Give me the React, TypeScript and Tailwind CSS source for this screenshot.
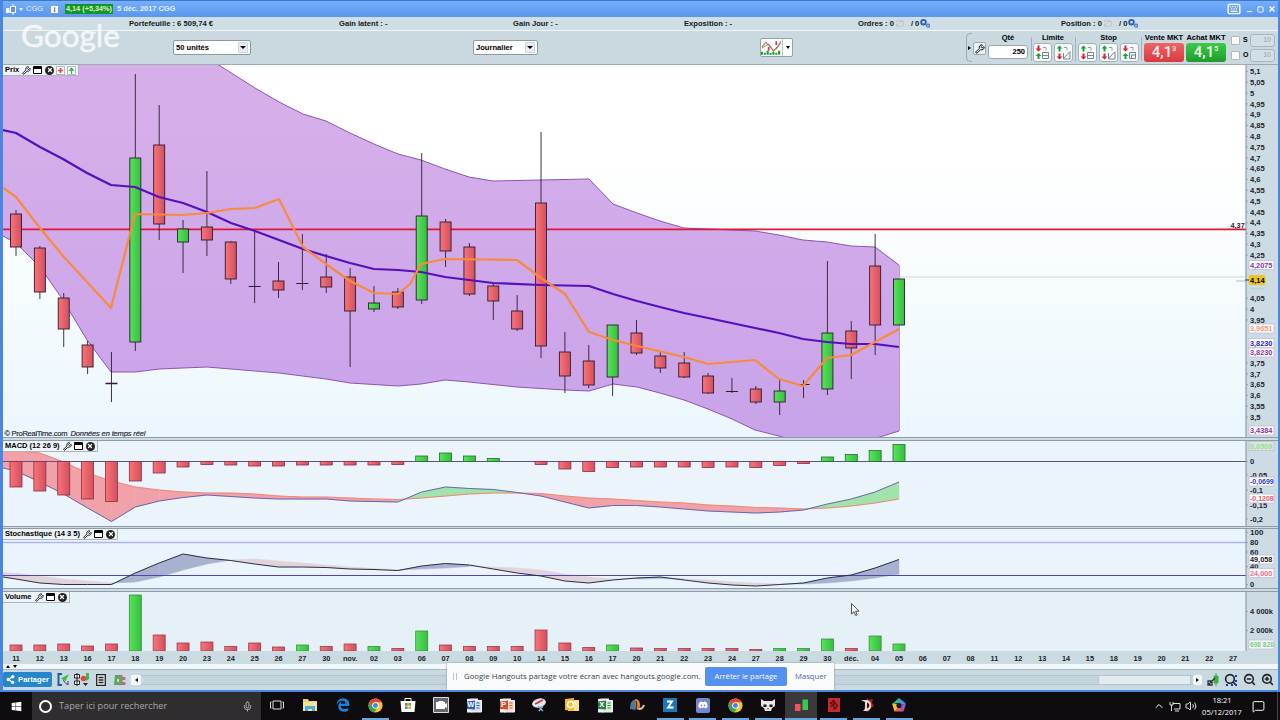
import type { ReactNode } from "react";
import {
  Wrench,
  Keyboard,
  Minus,
  Square,
  X,
  Mic,
  ChevronUp,
  Volume2,
  MessageSquare,
  ZoomIn,
  ZoomOut,
  Search,
} from "lucide-react";
import { FaWindows, FaShareAlt, FaDiscord } from "react-icons/fa";
import { FaEdgeLegacy } from "react-icons/fa6";

const STEP = 23.865;
const xAt = (i: number) => 16 + i * STEP;

// [high, top, bottom, low, up]
const candles: [number, number, number, number, number][] = [
  [210, 214, 247, 256, 0],
  [246, 248, 292, 299, 0],
  [293, 298, 329, 347, 0],
  [341, 345, 367, 374, 0],
  [352, 383, 384.5, 402, 1],
  [74, 158, 342, 351, 1],
  [105, 145, 224, 240, 0],
  [220, 229, 242, 273, 1],
  [171, 227, 240, 256, 0],
  [241, 242, 279, 284, 0],
  [231, 286, 287, 303, 1],
  [262, 281, 290, 298, 0],
  [234, 283, 284, 290, 1],
  [254, 277, 287, 293, 0],
  [268, 277, 311, 367, 0],
  [286, 303, 309, 312, 1],
  [288, 292, 307, 309, 0],
  [153, 216, 300, 304, 1],
  [219, 222, 251, 267, 0],
  [243, 247, 294, 296, 0],
  [284, 286, 301, 320, 0],
  [295, 311, 329, 331, 0],
  [132, 203, 346, 358, 0],
  [332, 352, 376, 393, 0],
  [345, 361, 385, 388, 0],
  [325, 325, 377, 396, 1],
  [320, 333, 353, 355, 0],
  [352, 356, 368, 373, 0],
  [352, 363, 377, 378, 0],
  [373, 376, 393, 394, 0],
  [378, 391, 392, 393, 1],
  [386, 389, 402, 404, 0],
  [380, 391, 402, 415, 1],
  [380, 384, 385, 398, 1],
  [261, 333, 389, 395, 1],
  [321, 331, 348, 379, 0],
  [234, 266, 325, 355, 0],
  [279, 279, 325, 325, 1],
];

const bandTop =
  "214,62 255,88 279,102 303,114 326,121 350,133 374,144 398,154 421,160 445,169 469,177 493,181 541,180 589,179 613,204 637,213 660,221 684,228 708,229 755,231 779,235 803,240 827,242 851,246 875,247 899,265";
const bandLow =
  "3,236 16,243 40,267 63,300 87,340 111,372 135,372 159,369 207,367 231,369 279,373 326,379 350,383 398,386 421,384 445,380 469,382 517,387 565,390 589,391 613,384 637,387 660,393 684,400 708,409 732,419 755,430 779,436 793,440 870,440 899,431";
const slowMa =
  "3,130 16,133 40,147 63,159 87,173 111,185 135,187 159,197 183,203 207,212 231,223 255,231 279,240 303,249 326,256 350,263 374,269 398,270 421,272 445,277 469,280 493,283 541,285 589,286 613,294 637,301 660,307 684,313 708,318 755,328 779,333 803,339 827,342 851,344 875,344 899,347";
const fastMa =
  "3,188 16,197 40,228 63,256 87,282 111,308 135,214 183,215 207,213 231,209 255,208 279,199 303,247 326,264 350,281 374,293 398,294 410,284 421,264 445,259 517,260 541,278 565,294 589,332 613,340 637,346 684,357 708,364 755,360 779,379 803,386 827,358 851,355 875,342 899,329";

const histogram = [
  487, 491, 495, 499, 501.5, 481, 473, 467, 464.5, 465, 466, 466, 465, 465, 465,
  465, 464.5, 456, 453, 456, 458.5, 461, 464.5, 469, 471.5, 467.5, 467, 467, 467,
  467.5, 467, 467.5, 465.5, 463.5, 457, 454.5, 450.5, 444.5,
];
const macd = [
  471, 482, 494, 508, 521.5, 507, 501, 497.5, 495, 496.5, 498, 499, 499, 499, 501,
  501.5, 502, 492, 487, 488.5, 489.5, 492.5, 496, 502, 508, 505.5, 505.5, 507, 509,
  511, 512, 513, 512, 510, 504, 499, 492, 482,
];
const signal = [
  451, 453, 462, 473, 481, 487, 490, 492, 493, 493, 494, 496, 497, 497, 498, 499,
  499.5, 498, 496, 494, 493, 493, 493.5, 496, 498, 499, 500.5, 502, 503, 505, 506,
  507.5, 508, 509, 508, 506, 503, 499,
];
const stochK = [
  579, 583, 584.5, 584.5, 584.5, 573, 563, 554, 558, 560.5, 564, 567, 567, 567.5,
  569, 569.5, 570.5, 566, 563.5, 565, 569, 573, 576, 581, 583, 580, 578, 577, 580,
  583, 585, 586, 584.5, 583, 578, 575, 568, 559.5,
];
const stochD = [
  573, 576, 579, 581, 583, 582, 577, 570, 564, 560, 559, 561, 563, 565, 567, 568.5,
  570, 569, 568, 566.5, 567, 568, 570, 574, 577, 579, 579, 578.5, 579, 580, 582,
  583, 584, 584, 583, 581, 578, 574,
];
const volume = [
  645, 645, 644, 646, 644, 595, 635, 643, 642, 646.5, 643, 647, 645, 646.5, 644,
  646.5, 648.5, 631, 645, 646.5, 646.5, 646.5, 630, 643, 647.5, 645, 648, 648.5,
  648.5, 648.5, 648.5, 649.5, 648.5, 648.5, 639, 648.5, 636, 644,
];
const volumeUp = [5, 12, 15, 17, 25, 32, 33, 34, 36, 37];

const days =
  "11 12 13 16 17 18 19 20 23 24 25 26 27 30 nov. 02 03 06 07 08 09 10 14 15 16 17 20 21 22 23 24 27 28 29 30 déc. 04 05 06 07 08 11 12 13 14 15 18 19 20 21 22 27".split(
    " "
  );

const line = (ys: number[]) => ys.map((y, i) => `${xAt(i)},${y}`).join(" ");

function Gradients() {
  return (
    <defs>
      <linearGradient id="up">
        <stop offset="0" stopColor="#58e458" />
        <stop offset="1" stopColor="#36bd40" />
      </linearGradient>
      <linearGradient id="down">
        <stop offset="0" stopColor="#fa7478" />
        <stop offset="1" stopColor="#d2505e" />
      </linearGradient>
      <linearGradient id="band" x1="0" y1="0" x2="0" y2="1">
        <stop offset="0" stopColor="#d7b0ea" />
        <stop offset="1" stopColor="#c9a3e9" />
      </linearGradient>
    </defs>
  );
}

// Area between two lines, one quad for each session
function Between({ a, b, above, below }: { a: number[]; b: number[]; above: string; below: string }) {
  return (
    <>
      {a.slice(1).map((_, k) => {
        const color = a[k] + a[k + 1] < b[k] + b[k + 1] ? above : below;
        return (
          <polygon
            key={k}
            points={`${xAt(k)},${a[k]} ${xAt(k + 1)},${a[k + 1]} ${xAt(k + 1)},${b[k + 1]} ${xAt(k)},${b[k]}`}
            fill={color}
            stroke={color}
            strokeWidth=".5"
          />
        );
      })}
    </>
  );
}

function PanelTag({ label, extra }: { label: string; extra?: boolean }) {
  return (
    <div className="absolute top-0 left-0 flex h-[11px] items-center gap-[2px] border-r border-b border-[#aab6c0] bg-[#eef3f7] pr-[2px] pl-[2px] text-[7.5px] leading-none font-bold">
      <span className="mr-px whitespace-nowrap">{label}</span>
      <Wrench size={9} strokeWidth={2.2} className="-scale-x-100 rotate-90" />
      <span className="h-2 w-[9px] rounded-[1px] border border-t-[3px] border-black bg-white" />
      <span className="ml-px flex h-[9px] w-[9px] items-center justify-center rounded-full bg-[#222]">
        <X size={6} strokeWidth={5} className="text-white" />
      </span>
      {extra && (
        <>
          <svg className="h-[9px] w-[9px]" viewBox="0 0 9 9">
            <rect x=".5" y=".5" width="8" height="8" fill="#fff" stroke="#bbb" />
            <path d="M4.5 2v5M2 4.5h5" stroke="#e04858" strokeWidth="1.7" />
          </svg>
          <svg className="h-[9px] w-[9px]" viewBox="0 0 9 9">
            <rect x=".5" y=".5" width="8" height="8" fill="#fff" stroke="#bbb" />
            <path d="M4.5 8V4M2.500 4.300 4.500 2l2 2.300z" fill="#32b848" stroke="#32b848" strokeWidth="1.100" />
          </svg>
        </>
      )}
    </div>
  );
}

function Tick({ y, children, size = 7.5 }: { y: number; children: string; size?: number }) {
  return (
    <>
      <path d={`M1246 ${y}h2`} stroke="#8c98a0" strokeWidth=".8" />
      <text x="1250" y={y + 2.7} fontSize={size} fontWeight="bold" fill="#1c242c">
        {children}
      </text>
    </>
  );
}

function ValueBox({ y, color, children, bg = "#f8fafc", size = 7.3 }: { y: number; color: string; children: string; bg?: string; size?: number }) {
  return (
    <>
      <rect x="1249" y={y - 4.5} width="25" height="9" fill={bg} stroke="#c3bdd8" strokeWidth=".8" />
      <text x="1250" y={y + 2.7} fontSize={size} fontWeight="bold" fill={color}>
        {children}
      </text>
    </>
  );
}

function PricePanel() {
  const labels = Array.from({ length: 33 }, (_, i) => 510 - i * 5).filter(
    (p) => ![420, 415, 410, 390, 385, 380].includes(p)
  );
  return (
    <div className="relative h-[373px] border-b border-[#8f9ca8]">
      <svg className="block h-[372px] w-[1275px]" viewBox="3 65 1275 372">
        <Gradients />
        <defs>
          <linearGradient id="priceBg" x1="0" y1="0" x2="0" y2="1">
            <stop offset=".25" stopColor="#ffffff" />
            <stop offset="1" stopColor="#ebf7fd" />
          </linearGradient>
        </defs>
        <rect x="3" y="65" width="1243" height="372" fill="url(#priceBg)" />
        <polygon
          points={`3,62 ${bandTop} ${bandLow.split(" ").reverse().join(" ")}`}
          fill="url(#band)"
        />
        <g fill="none" strokeLinejoin="round">
          <polyline points={bandTop} stroke="#8a55b5" />
          <polyline points={bandLow} stroke="#8a55b5" />
          <path d="M899.500 265V431" stroke="#b79ad0" />
          <path d="M899 277H1246" stroke="#cddccb" strokeWidth="1.200" />
          <path d="M3 229.300H1246" stroke="#e01436" strokeWidth="1.800" />
        </g>
        {candles.map(([high, top, bottom, low, up], i) => (
          <g key={i} stroke="#2c1c30" strokeWidth=".9">
            <path d={`M${xAt(i)} ${high}V${low}`} />
            {bottom - top < 3 ? (
              <path d={`M${xAt(i) - 6} ${top + 0.5}h12`} strokeWidth={bottom - top} />
            ) : (
              <rect
                x={xAt(i) - 5.5}
                y={top}
                width="11"
                height={bottom - top}
                fill={up ? "url(#up)" : "url(#down)"}
              />
            )}
          </g>
        ))}
        <g fill="none" strokeLinejoin="round">
          <polyline points={slowMa} stroke="#5410bd" strokeWidth="2.2" />
          <polyline points={fastMa} stroke="#f98a3c" strokeWidth="2.2" />
        </g>
        <path d="M1246 65V437" stroke="#7f8c98" />
        <text x="1230.500" y="228" fontSize="7.3" fontWeight="bold" fill="#302428">
          4,37
        </text>
        {labels.map((p) => (
          <Tick key={p} y={71.5 + ((510 - p) / 5) * 10.8} size={7.6}>
            {String(p / 100).replace(".", ",")}
          </Tick>
        ))}
        <ValueBox y={265} color="#8b35a5">4,2075</ValueBox>
        <path d="M1236 281h9" stroke="#b0b8bc" />
        <rect x="1248.500" y="275" width="17" height="10" rx="2" fill="#ecc61c" />
        <path d="M1245 280h4" stroke="#333" />
        <text x="1250" y="282.7" fontSize="7.5" fontWeight="bold">
          4,14
        </text>
        <path d="M1251 288.5h13" stroke="#a8dcb8" strokeWidth="1.5" strokeDasharray="3 1" />
        <ValueBox y={328.5} color="#ef9d74">3,9651</ValueBox>
        <ValueBox y={352.5} color="#8b35a5">3,8230</ValueBox>
        <ValueBox y={343} color="#2824c4">3,8230</ValueBox>
        <ValueBox y={430.5} color="#8b35a5">3,4384</ValueBox>
        <text x="4.5" y="436" fontSize="7.6" textLength="63" fill="#1c2430" stroke="#1c2430" strokeWidth=".15">
          © ProRealTime.com
        </text>
        <text x="70.5" y="436" fontSize="7.6" textLength="75" fontStyle="italic" fill="#1c2430" stroke="#1c2430" strokeWidth=".15">
          Données en temps réel
        </text>
      </svg>
      <PanelTag label="Prix" extra />
    </div>
  );
}

function MacdPanel() {
  return (
    <div className="relative mt-[2px] h-[87px] border-y border-[#8f9ca8]">
      <svg className="block h-[85px] w-[1275px]" viewBox="3 441 1275 85">
        <rect x="3" y="441" width="1243" height="85" fill="#ebf3fb" />
        <polygon points="3,451 16,451 16,471 3,468" fill="#f0a2a8" />
        <Between a={macd} b={signal} above="#a2e3ab" below="#f0a2a8" />
        <g fill="none" strokeWidth="1">
          <polyline points={`3,451 ${line(signal)}`} stroke="#ef8878" />
          <polyline points={`3,468 ${line(macd)}`} stroke="#6865b8" />
          <path d="M3 461.5H1246" stroke="#55558c" />
        </g>
        {histogram.map((y, i) =>
          y === 461 ? null : (
            <rect
              key={i}
              x={xAt(i) - 6}
              y={Math.min(y, 461.5)}
              width="12"
              height={Math.abs(y - 461.5)}
              fill={y < 461 ? "url(#up)" : "url(#down)"}
              stroke={y < 461 ? "#20702c" : "#8c2c48"}
              strokeWidth=".8"
            />
          )
        )}
        <path d="M1246 441V526" stroke="#7f8c98" />
        <ValueBox y={446} color="#9fd8a4" bg="#d5ead9">0,0509</ValueBox>
        <Tick y={461.5}>0</Tick>
        <Tick y={475}>-0,05</Tick>
        <Tick y={490}>-0,1</Tick>
        <Tick y={505}>-0,15</Tick>
        <ValueBox y={481.5} color="#3340c8" size={7}>-0,0699</ValueBox>
        <ValueBox y={498.5} color="#e0606a" size={7}>-0,1208</ValueBox>
        <Tick y={519}>-0,2</Tick>
      </svg>
      <PanelTag label="MACD (12 26 9)" />
    </div>
  );
}

function StochPanel() {
  return (
    <div className="relative mt-px h-[61px] border-y border-[#8f9ca8]">
      <svg className="block h-[59px] w-[1275px]" viewBox="3 529 1275 59">
        <rect x="3" y="529" width="1243" height="60" fill="#e9f4fc" />
        <polygon points="3,572 16,573 16,579 3,577" fill="#e2d3da" />
        <Between a={stochK} b={stochD} above="#a9b1d0" below="#e2d3da" />
        <g fill="none">
          <path d="M3 542.5H1246" stroke="#b2b4ea" strokeWidth="1.6" />
          <path d="M3 575.500H1246" stroke="#5345ae" />
          <polyline points={`3,577 ${line(stochK)}`} stroke="#2b3046" />
        </g>
        <path d="M1246 529V588" stroke="#7f8c98" />
        <Tick y={532.500} size={8}>100</Tick>
        <Tick y={542.5}>80</Tick>
        <Tick y={552}>60</Tick>
        <Tick y={566.500}>40</Tick>
        <ValueBox y={559.5} color="#222">49,058</ValueBox>
        <ValueBox y={573} color="#f07088">24,000</ValueBox>
        <Tick y={584.500}>0</Tick>
      </svg>
      <PanelTag label="Stochastique (14 3 5)" />
    </div>
  );
}

function VolumePanel() {
  return (
    <div className="relative mt-[2px] h-[60px] border-t border-[#8f9ca8]">
      <svg className="block h-[59px] w-[1275px]" viewBox="3 592 1275 59">
        <rect x="3" y="592" width="1243" height="59" fill="#e5f1f7" />
        {volume.map((y, i) => (
          <rect
            key={i}
            x={xAt(i) - 6}
            y={y}
            width="12"
            height={651 - y}
            fill={volumeUp.includes(i) ? "url(#up)" : "url(#down)"}
            stroke={volumeUp.includes(i) ? "#3a8c44" : "#9c3a50"}
            strokeWidth=".8"
          />
        ))}
        <path d="M1246 592V651" stroke="#7f8c98" />
        <Tick y={611.5}>4 000k</Tick>
        <Tick y={630.5}>2 000k</Tick>
        <ValueBox y={644.5} color="#6fcf78" size={6.6}>698 820</ValueBox>
      </svg>
      <PanelTag label="Volume" />
    </div>
  );
}

function TitleBar() {
  return (
    <div className="flex h-[17px] items-center border-t border-[#3a78c0] bg-linear-to-b from-[#74aefc] to-[#5b96ee] text-[7.5px] font-bold text-[#e4f0ff]">
      <svg className="ml-[3px] h-[11px] w-[11px]" viewBox="0 0 11 11">
        <path d="M7 0v11" stroke="#fff" />
        <rect x="4.5" y="2.5" width="5" height="6" fill="#5b96ee" stroke="#fff" />
        <rect x="0" y="4" width="3.5" height="5" fill="#fff" />
      </svg>
      <span className="ml-[2px] border-x-[2.5px] border-t-[3px] border-x-transparent border-t-white" />
      <span className="ml-[3px] w-[25px] font-normal">CGG</span>
      <span className="flex h-[7px] w-[7px] items-center justify-center bg-white text-[7px] leading-none text-[#3a5a80]">i</span>
      <span className="ml-[7px] flex h-[10px] w-[48px] items-center justify-center bg-[#129626] text-[7.3px] whitespace-nowrap text-[#d8f8c8]">
        4,14 (+5,34%)
      </span>
      <span className="ml-[4px] text-[7.4px] whitespace-nowrap">5 déc. 2017 CGG</span>
      <div className="mr-[2px] ml-auto flex items-center gap-[4px] text-white">
        <Keyboard size={14} strokeWidth={2.4} className="mr-px" />
        <Minus size={7} strokeWidth={4} className="mt-[5px]" />
        <Square size={7} strokeWidth={3} />
        <X size={8} strokeWidth={4} />
      </div>
    </div>
  );
}

function Gears() {
  return (
    <svg className="ml-px h-[9px] w-[10px]" viewBox="0 0 10 9">
      <circle cx="3.5" cy="3.2" r="2.3" fill="none" stroke="#2860b8" strokeWidth="1.8" />
      <circle cx="8" cy="6.6" r="1.5" fill="none" stroke="#3b78c8" strokeWidth="1.2" />
    </svg>
  );
}

function Counts({ label }: { label: string }) {
  return (
    <>
      <span>{label} : 0</span>
      <svg className="ml-[2px] h-[7px] w-[8px]" viewBox="0 0 8 7">
        <path d="M0 1h7v5H0zM1 5l5-4" fill="#dde2e4" stroke="#b0b8bc" strokeWidth=".8" />
      </svg>
      <span className="ml-[7px]">/ 0</span>
      <Gears />
    </>
  );
}

function StatusRow() {
  return (
    <div className="flex h-[14px] border-b border-[#eef6fa] bg-[#cfdde5] pl-[126px] text-[7.6px] font-bold whitespace-nowrap text-[#121a22]">
      <span className="flex w-[210px] items-center">Portefeuille : 6 509,74 €</span>
      <span className="flex w-[174px] items-center">Gain latent : -</span>
      <span className="flex w-[171px] items-center">Gain Jour : -</span>
      <span className="flex w-[174px] items-center">Exposition : -</span>
      <span className="flex w-[203px] items-center">
        <Counts label="Ordres" />
      </span>
      <span className="flex items-center">
        <Counts label="Position" />
      </span>
    </div>
  );
}

function Select({ children, className }: { children: string; className: string }) {
  return (
    <div className={`flex h-[15px] items-center justify-between rounded-[2px] border border-[#8b9aa6] bg-white pr-[2px] pl-[2px] text-[7.6px] font-bold ${className}`}>
      <span>{children}</span>
      <span className="flex h-[11px] w-[10px] items-center justify-center rounded-[1px] border border-[#ccd6dc] bg-[#e6ecf0]">
        <span className="border-x-[3px] border-t-[3.5px] border-x-transparent border-t-black" />
      </span>
    </div>
  );
}

function OrderButton({ kind }: { kind: "buy" | "sell" | "line" | "exit" | "lineSell" }) {
  const sellFirst = kind === "sell" || kind === "exit" || kind === "lineSell";
  return (
    <div className="h-[19px] w-[19px] rounded-[3px] border border-[#a6b2ba] bg-[#f6f9fa]">
      <svg className="h-[17px] w-[17px]" viewBox="0 0 17 17">
        {sellFirst ? (
          <>
            <path d="M4.500 7.500 1.500 4.500h2v-3h2v3h2z" fill="#d42434" />
            <path d="M4.500 9 1.500 12h2v3h2v-3h2z" fill="#20a030" />
          </>
        ) : (
          <>
            <path d="M4.500 1.500 1.500 4.500h2v3h2v-3h2z" fill="#20a030" />
            <path d="M4.500 15.500 1.500 12.500h2v-3h2v3h2z" fill="#d42434" />
          </>
        )}
        <path d="M9 3.500h3v3" stroke="#8c9aa0" fill="none" strokeWidth=".9" />
        {kind === "line" || kind === "lineSell" ? (
          <path d="M8.500 14.500 15 7.500M8.500 9v6H15V8" stroke="#78868c" fill="none" />
        ) : kind === "exit" ? (
          <path d="M8.500 8.500h6v6h-6zM10.500 14v-3h4" stroke="#78868c" fill="none" />
        ) : (
          <path d="M8.500 8.500h6v6h-6zM8.500 11.500h6" stroke="#78868c" fill="none" />
        )}
      </svg>
    </div>
  );
}

function ToolGroup({ label, children }: { label: string; children: ReactNode }) {
  return (
    <div className="flex flex-col items-center">
      <span className="h-[10px] text-[7.5px] leading-[9px] font-bold whitespace-nowrap">{label}</span>
      <div className="flex gap-[2px]">{children}</div>
    </div>
  );
}

function Toolbar() {
  return (
    <div className="flex h-[34px] items-center border-b border-[#9caab4] bg-[#cad9e0] pl-[170px] text-black">
      <Select className="w-[78px]">50 unités</Select>
      <Select className="ml-[222px] w-[65px]">Journalier</Select>
      <div className="ml-[222px] flex h-[19px] w-[33px] rounded-[2px] border border-[#94a2ac] bg-white">
        <svg className="h-[17px] w-[22px] border-r border-[#b8c0c8]" viewBox="0 0 22 17">
          <path d="M1 8 5 3l4 4 4 5 3-2 5-8" stroke="#c88850" fill="none" strokeWidth="1.300" />
          <path d="M1 9 8 5l5 7 8-8" stroke="#60686c" fill="none" strokeWidth=".8" />
          <path d="M8 8v4M16 2v4" stroke="#d83040" strokeWidth="1.800" />
          <path d="M1 16v-3M4 16v-2M7 16v-4M10 16v-2M13 16v-3M16 16v-2M19 16v-4" stroke="#259438" strokeWidth="2.200" />
        </svg>
        <span className="m-auto border-x-[2.5px] border-t-[3px] border-x-transparent border-t-black" />
      </div>
      <div className="ml-[173px] flex h-[29px] w-[6px] items-center rounded-l-[5px] border-y border-l border-[#9eabb4]">
        <span className="ml-px border-y-[2.5px] border-l-[3px] border-y-transparent border-l-black" />
      </div>
      <div className="mt-[2px] ml-px flex h-[13px] w-[13px] items-center justify-center rounded-[2px] border border-[#9aa8b2] bg-[#eef3f6]">
        <Wrench size={10} strokeWidth={2.2} className="-scale-x-100 rotate-90" />
      </div>
      <div className="mb-px ml-[2px] flex h-[29px] items-start">
        <ToolGroup label="Qté">
          <div className="mt-[2px] flex h-[14px] w-[40px] items-center justify-end rounded-[3px] border border-[#9aa8b2] bg-white pr-[2px] text-[7.5px] font-bold">
            250
          </div>
        </ToolGroup>
        <span className="mr-px ml-[3px] mt-1 h-6 w-px bg-[#a4b2bb]" />
        <ToolGroup label="Limite">
          <OrderButton kind="sell" />
          <OrderButton kind="line" />
        </ToolGroup>
        <span className="mx-[2px] mt-1 h-6 w-px bg-[#a4b2bb]" />
        <ToolGroup label="Stop">
          <OrderButton kind="buy" />
          <OrderButton kind="line" />
          <OrderButton kind="exit" />
        </ToolGroup>
        <span className="mx-[2px] mt-1 h-6 w-px bg-[#a4b2bb]" />
        <ToolGroup label="Vente MKT">
          <div className="flex h-[19px] w-[40px] items-center justify-center rounded-[3px] bg-linear-to-b from-[#ee6464] to-[#d8383f] font-[Roboto,sans-serif] text-[15px] font-medium text-[#fff0f0]">
            4,1<sup className="text-[7px]">3</sup>
          </div>
        </ToolGroup>
        <span className="w-[2px]" />
        <ToolGroup label="Achat MKT">
          <div className="flex h-[19px] w-[40px] items-center justify-center rounded-[3px] bg-linear-to-b from-[#3fca49] to-[#1c9c2a] font-[Roboto,sans-serif] text-[15px] font-medium text-[#f0fff0]">
            4,1<sup className="text-[7px]">5</sup>
          </div>
        </ToolGroup>
      </div>
      <div className="ml-[5px] flex flex-col gap-[2px] text-[7px] font-bold">
        {["S", "O"].map((side) => (
          <div key={side} className="flex items-center">
            <span className="h-[9px] w-[9px] rounded-[1px] border border-[#aab8c0] bg-white" />
            <span className="ml-[3px] w-[7px]">{side}</span>
            <span className="flex h-[13px] w-[25px] items-center justify-end rounded-[3px] border border-[#a8b6c0] bg-[#d2dfe6] pr-[3px] font-normal text-[#94a4ae]">
              10
            </span>
          </div>
        ))}
      </div>
    </div>
  );
}

function DateAxis() {
  return (
    <div className="h-[13px] bg-[#cbdbe2]">
      <svg className="block h-[13px] w-[1275px]" viewBox="3 652 1275 13">
        {days.map((d, i) => (
          <text key={i} x={xAt(i)} y="662.300" fontSize="7.3" fontWeight="bold" textAnchor="middle" fill="#1a2228">
            {d}
          </text>
        ))}
      </svg>
    </div>
  );
}

function BottomBar() {
  return (
    <div className="flex h-[19px] items-center bg-[#c9d9e1]">
      <div className="flex h-[15px] w-[49px] items-center justify-center gap-[3px] rounded-[2px] bg-[#2587cb] text-[7.6px] font-bold text-white">
        <FaShareAlt size={9} />
        Partager
      </div>
      <svg className="ml-[5px] h-[13px] w-[13px]" viewBox="0 0 13 13">
        <path d="M5 1H1.500v11H5" stroke="#215f9c" strokeWidth="2" fill="none" />
        <path d="M4 5.500 12 1 8.500 8z" fill="#38bd45" />
        <path d="M6 7.500c2 0 2 4 5 4M11 8v4" stroke="#444" fill="none" />
      </svg>
      <svg className="ml-[4px] h-[13px] w-[16px]" viewBox="0 0 16 13">
        <path d="M3 0v13M.500 1.500h5v3.500h-5zM.500 8h5v3.500h-5z" stroke="#222" fill="#fff" />
        <circle cx="9.500" cy="5.500" r="2.800" fill="#e04838" />
        <path d="M12 0h3v6l-3 2z" fill="#3cb848" />
        <path d="M9 10h5l-2.500 3z" fill="#222" />
      </svg>
      <svg className="ml-[6px] h-[12px] w-[10px]" viewBox="0 0 10 12">
        <path d="M.7.700h8.600v10.600H.7zM2.500 3.500h5M2.500 6h5M2.500 8.500h5" stroke="#222" strokeWidth="1.300" fill="#f4f6f8" />
      </svg>
      <svg className="ml-[8px] h-[12px] w-[12px]" viewBox="0 0 12 12">
        <path d="M1 1h6v4H3v3h4v3H0" fill="#58a860" />
        <path d="M5 1.500h3v2h3v2H8v3h3v2H5" stroke="#c86070" fill="#6aa468" />
      </svg>
      <span className="ml-[5px] flex h-[10px] w-[10px] items-center justify-center rounded-[2px] bg-[#f6f9fb]">
        <span className="border-y-[2.5px] border-r-[3px] border-y-transparent border-r-black" />
      </span>
      <div className="flex h-[10px] flex-1 justify-end border-y border-[#b3c4cd] bg-[#c3d4dc]">
        <div className="mr-[2px] w-[93px] rounded-[1px] border-x border-[#b8c4cc] bg-[#e2ebf0]" />
      </div>
      <span className="flex h-[10px] w-[9px] items-center justify-center rounded-[2px] bg-[#f6f9fb]">
        <span className="border-y-[2.5px] border-l-[3px] border-y-transparent border-l-black" />
      </span>
      <div className="ml-[5px] flex gap-[5.5px] pr-[4px] text-[#222]">
        <svg className="h-[13px] w-[12px]" viewBox="0 0 12 13">
          <path d="M9 0v13M7 3h4v7H7z" fill="#3bb04a" stroke="#3bb04a" />
          <path d="M1 12 8 5M1 8h4v4H1z" stroke="#333" fill="#eee" strokeWidth="1.300" />
        </svg>
        <span className="relative">
          <Search size={13} strokeWidth={3} />
          <span className="absolute right-0 bottom-0 h-[11px] w-[11px] border-r-2 border-b-2 border-dotted border-[#1c38c0]" />
        </span>
        <ZoomOut size={13} strokeWidth={2.8} />
        <ZoomIn size={13} strokeWidth={2.8} />
      </div>
    </div>
  );
}

function ShareBanner() {
  return (
    <div className="absolute top-[663px] left-[447px] flex h-[27px] w-[387px] items-center bg-[#f8fafc] font-['Open_Sans','Liberation_Sans',sans-serif] whitespace-nowrap shadow-[0_0_2px_#7d8d99]">
      <span className="ml-[6px] h-[7px] w-[4px] border-x border-[#c0c4c8]" />
      <span className="ml-[7px] w-[241px] text-[7.8px] text-[#3c4248]">
        Google Hangouts partage votre écran avec hangouts.google.com.
      </span>
      <span className="flex h-[19px] w-[82px] items-center justify-center rounded-[2px] bg-[#5490f0] text-[7.6px] text-white">
        Arrêter le partage
      </span>
      <span className="ml-[8px] text-[7.7px] text-[#506898]">Masquer</span>
    </div>
  );
}

function ChromeIcon() {
  return (
    <svg className="h-[15px] w-[15px]" viewBox="0 0 16 16">
      <circle cx="8" cy="8" r="7.500" fill="#f4c52c" />
      <path d="M1.500 4.300A7.500 7.500 0 0 1 14.700 4.500H8L5 9.700z" fill="#e24436" />
      <path d="M1.500 4.300 5 9.700l5 .5-3.200 5.200A7.500 7.500 0 0 1 1.500 4.300z" fill="#35a356" />
      <circle cx="8" cy="8" r="3.500" fill="#fff" />
      <circle cx="8" cy="8" r="2.600" fill="#3f81e8" />
    </svg>
  );
}

function OfficeIcon({ letter, color, paper }: { letter: string; color: string; paper: string }) {
  return (
    <div className="relative h-[15px] w-[16px]">
      <svg className="h-[15px] w-[16px]" viewBox="0 0 16 15">
        <path d="M1 1 5 .5h7V13l-7 1.500H1z" fill="#eef1f4" />
        <path d="M5 2.500h10.500V14H5z" fill={paper} stroke="#f4f6f8" />
        <path d="M1 3.500 9 2.500v9l-8-.500z" fill={color} />
        <path d="M10.500 5h3M10.500 7.500h3M10.500 10h3" stroke={color} />
      </svg>
      <span className="absolute top-[3px] left-[1px] flex h-2 w-2 items-center justify-center text-[7.5px] leading-none font-bold text-white">
        {letter}
      </span>
    </div>
  );
}

const Glyph = ({ children }: { children: ReactNode }) => (
  <svg className="h-[16px] w-[16px]" viewBox="0 0 16 16">
    {children}
  </svg>
);

const apps: { icon: ReactNode; open?: boolean; active?: boolean }[] = [
  {
    icon: (
      <Glyph>
        <path d="M4 4h8v8H4zM2.500 5H1.500v6h1M13.500 5h1v6h-1" stroke="#ddd" fill="none" />
      </Glyph>
    ),
  },
  {
    icon: (
      <Glyph>
        <path d="M1 2h5l1 2h8v10H1z" fill="#f0d077" />
        <path d="M1 5h14v9H1z" fill="#f8e29a" />
        <path d="M3 14V9h10v5h-3v-2H6v2z" fill="#48aee0" />
      </Glyph>
    ),
  },
  { icon: <FaEdgeLegacy size={14} color="#1684dc" /> },
  { icon: <ChromeIcon />, open: true },
  {
    icon: (
      <Glyph>
        <path d="M5 4V1.500h6V4" stroke="#fff" fill="none" />
        <path d="M.500 4h15l-1 11h-13z" fill="#fff" />
        <path d="M5 6h2.700v2.700H5z" fill="#e85030" />
        <path d="M8.300 6H11v2.700H8.300z" fill="#70b030" />
        <path d="M5 9.300h2.700V12H5z" fill="#2898e0" />
        <path d="M8.300 9.300H11V12H8.300z" fill="#f0b020" />
      </Glyph>
    ),
  },
  {
    icon: (
      <Glyph>
        <path d="M.5.500h15v15H.5z" fill="#646a70" stroke="#d8dcde" />
        <path d="M3 5h2l1-1h4l1 1h1v2l2-1v5l-2-1v2H3z" fill="#fff" />
      </Glyph>
    ),
  },
  { icon: <OfficeIcon letter="W" color="#2d5ea8" paper="#d4e2f4" /> },
  { icon: <OfficeIcon letter="P" color="#d2502c" paper="#f6dcd0" /> },
  {
    icon: (
      <Glyph>
        <ellipse cx="8" cy="6" rx="7" ry="4.500" fill="#e6e6e8" transform="rotate(-15 8 6)" />
        <path d="M4 7c3-1 5-3 8-4" stroke="#d03838" strokeWidth="1.800" fill="none" />
        <path d="M7 9l5 5M12 9l-4 5" stroke="#7db8cc" strokeWidth="1.500" />
      </Glyph>
    ),
  },
  {
    icon: (
      <Glyph>
        <path d="M4 3h11v11H4z" fill="#fae08a" />
        <path d="M1 2l9-1v13l-9-1z" fill="#f3b92c" />
        <path d="M10 5 15 10" stroke="#fff" />
        <circle cx="6.500" cy="7.500" r="3" fill="none" stroke="#fff" strokeWidth="1.600" />
      </Glyph>
    ),
  },
  { icon: <OfficeIcon letter="X" color="#2f7d43" paper="#d4ecd8" /> },
  {
    icon: (
      <Glyph>
        <path d="M1 12C1 5 4 2 7 3c3 2 2 8-1 10z" fill="#507898" />
        <path d="M6 2c5 0 6 5 4 11l-3-1z" fill="#e88630" />
        <path d="M7 4c1 3 1 5 0 8" stroke="#222" fill="none" />
        <path d="M10 12c2 0 4-1 5-4" stroke="#e0c8a8" strokeWidth="2" fill="none" />
      </Glyph>
    ),
  },
  {
    icon: (
      <Glyph>
        <path d="M1 1h14v14H1z" fill="#2076b4" />
        <path d="M5 4.500h5L6 10.500h5.500" stroke="#fff" strokeWidth="1.800" fill="none" />
      </Glyph>
    ),
    open: true,
  },
  {
    icon: (
      <span className="flex h-[15px] w-[14px] items-center justify-center rounded-[2px] bg-[#7387cc]">
        <FaDiscord size={10} color="#fff" />
      </span>
    ),
    open: true,
  },
  { icon: <ChromeIcon />, open: true },
  {
    icon: (
      <Glyph>
        <path d="M1 2 4 4h8l3-2v7l-3 2-1 3H5l-1-3-3-2z" fill="#e8e8e8" />
        <path d="M3.500 7.500h3v2.500h-3zM9.500 7.500h3v2.500h-3zM7.500 11h1v1.500h-1z" fill="#181010" />
      </Glyph>
    ),
    open: true,
  },
  {
    icon: (
      <Glyph>
        <path d="M2 7h5.500v7H2z" fill="#ef5360" />
        <path d="M9.500 2.500H15V13H9.500z" fill="#34cc48" />
      </Glyph>
    ),
    open: true,
    active: true,
  },
  {
    icon: (
      <Glyph>
        <path d="M2 1h12v14H2z" fill="#c52a30" />
        <path d="M8 3 4.500 6.500l3 1-3 2.500M8.500 5.500l3 3-3 4M8 3v10" stroke="#581014" strokeWidth="1.300" fill="none" />
      </Glyph>
    ),
    open: true,
  },
  {
    icon: (
      <Glyph>
        <path d="M8 1l2 2 4-1-1 4 2 3-4 3-2 3-4-2z" fill="#b01c20" />
        <path d="M2 3h5c7 0 7 11 0 11H4l2-2V5z" fill="#e8ddd4" />
        <path d="M8 5.500c3 1 3 5 0 6z" fill="#30100c" />
      </Glyph>
    ),
    open: true,
  },
  {
    icon: (
      <Glyph>
        <path d="M8 1 8 6 1 7z" fill="#38b878" />
        <path d="M8 1 15 6.500 10 8 8 6z" fill="#4098e0" />
        <path d="M15 6.500 12.500 14.500 9 11l1-3z" fill="#9b58d0" />
        <path d="M12.500 14.500h-9L7 11h2z" fill="#ec5a60" />
        <path d="M3.500 14.500 1 6.500 6 7l1 4z" fill="#f0c040" />
        <circle cx="8" cy="8.500" r="2.600" fill="#201828" />
      </Glyph>
    ),
    open: true,
  },
];

function Taskbar() {
  return (
    <div className="flex h-[28px] bg-[#0f0c10] text-white">
      <div className="flex w-[32px] items-center justify-center">
        <FaWindows size={11} />
      </div>
      <div className="flex w-[229px] items-center bg-[#2f2d30] pr-[8px] pl-[7px]">
        <span className="h-[13px] w-[13px] rounded-full border-2 border-white" />
        <span className="ml-[7px] font-['Open_Sans','Liberation_Sans',sans-serif] text-[9.2px] text-[#a8a8a8]">
          Taper ici pour rechercher
        </span>
        <Mic size={11} strokeWidth={1.8} className="ml-auto text-[#c8c8c8]" />
      </div>
      <div className="flex w-[654.8px]">
        {apps.map((app, i) => (
          <div
            key={i}
            className={`flex flex-1 justify-center ${app.active ? "bg-[#3b393c]" : ""}`}
          >
            <span
              className={`flex items-center justify-center border-b-2 ${app.active ? "w-full" : "w-[27px]"} ${
                app.open ? "border-[#66a6dc]" : "border-transparent"
              }`}
            >
              {app.icon}
            </span>
          </div>
        ))}
      </div>
      <div className="mr-[2px] ml-auto flex items-center border-r border-[#4a4648] font-['Open_Sans','Liberation_Sans',sans-serif]">
        <ChevronUp size={12} strokeWidth={2} />
        <svg className="ml-[4px] h-[11px] w-[12px]" viewBox="0 0 12 11">
          <path d="M4 2.500h7v5.500H5M6 10h4M1 1v3h3V1M2.500 4v6" stroke="#ddd" fill="none" />
        </svg>
        <Volume2 size={12} strokeWidth={1.8} className="ml-[4px]" />
        <div className="ml-[5px] flex w-[40px] flex-col items-center text-[7.5px] leading-[12px]">
          <span>18:21</span>
          <span>05/12/2017</span>
        </div>
        <MessageSquare size={13} strokeWidth={1.8} className="mr-[12px] ml-[10px]" />
      </div>
    </div>
  );
}

export default function App() {
  return (
    <div className="relative flex h-[720px] w-[1280px] flex-col overflow-hidden bg-[#0f0c10] font-['Liberation_Sans',Arial,sans-serif]">
      <div className="flex h-[692px] flex-col border-r-2 border-b-2 border-l-3 border-[#4a86e0] bg-[#cddce4]">
        <TitleBar />
        <StatusRow />
        <Toolbar />
        <PricePanel />
        <MacdPanel />
        <StochPanel />
        <VolumePanel />
        <DateAxis />
        <div className="flex h-[6px] items-center gap-px border-b border-[#a8b8c2] bg-[#f2f7fa] pl-[3px]">
          <span className="border-x-[2.5px] border-b-[3px] border-x-transparent border-b-black" />
          <span className="ml-[2px] border-x-[2.5px] border-t-[3px] border-x-transparent border-t-black" />
        </div>
        <BottomBar />
      </div>
      <Taskbar />
      <span className="absolute top-[16px] left-[21px] font-[Lato,'Open_Sans',sans-serif] text-[31.5px] leading-[38px] text-white/75 [-webkit-text-stroke:0.7px_rgba(255,255,255,0.6)]">
        Google
      </span>
      <ShareBanner />
      <svg className="absolute top-[603px] left-[851px] h-[13px] w-[9px]" viewBox="0 0 9 13">
        <path d="M.5.500v10.500l2.500-2.300 1.700 3.800 1.500-.7-1.600-3.600H8z" fill="#fff" stroke="#222" strokeWidth=".8" />
      </svg>
    </div>
  );
}
